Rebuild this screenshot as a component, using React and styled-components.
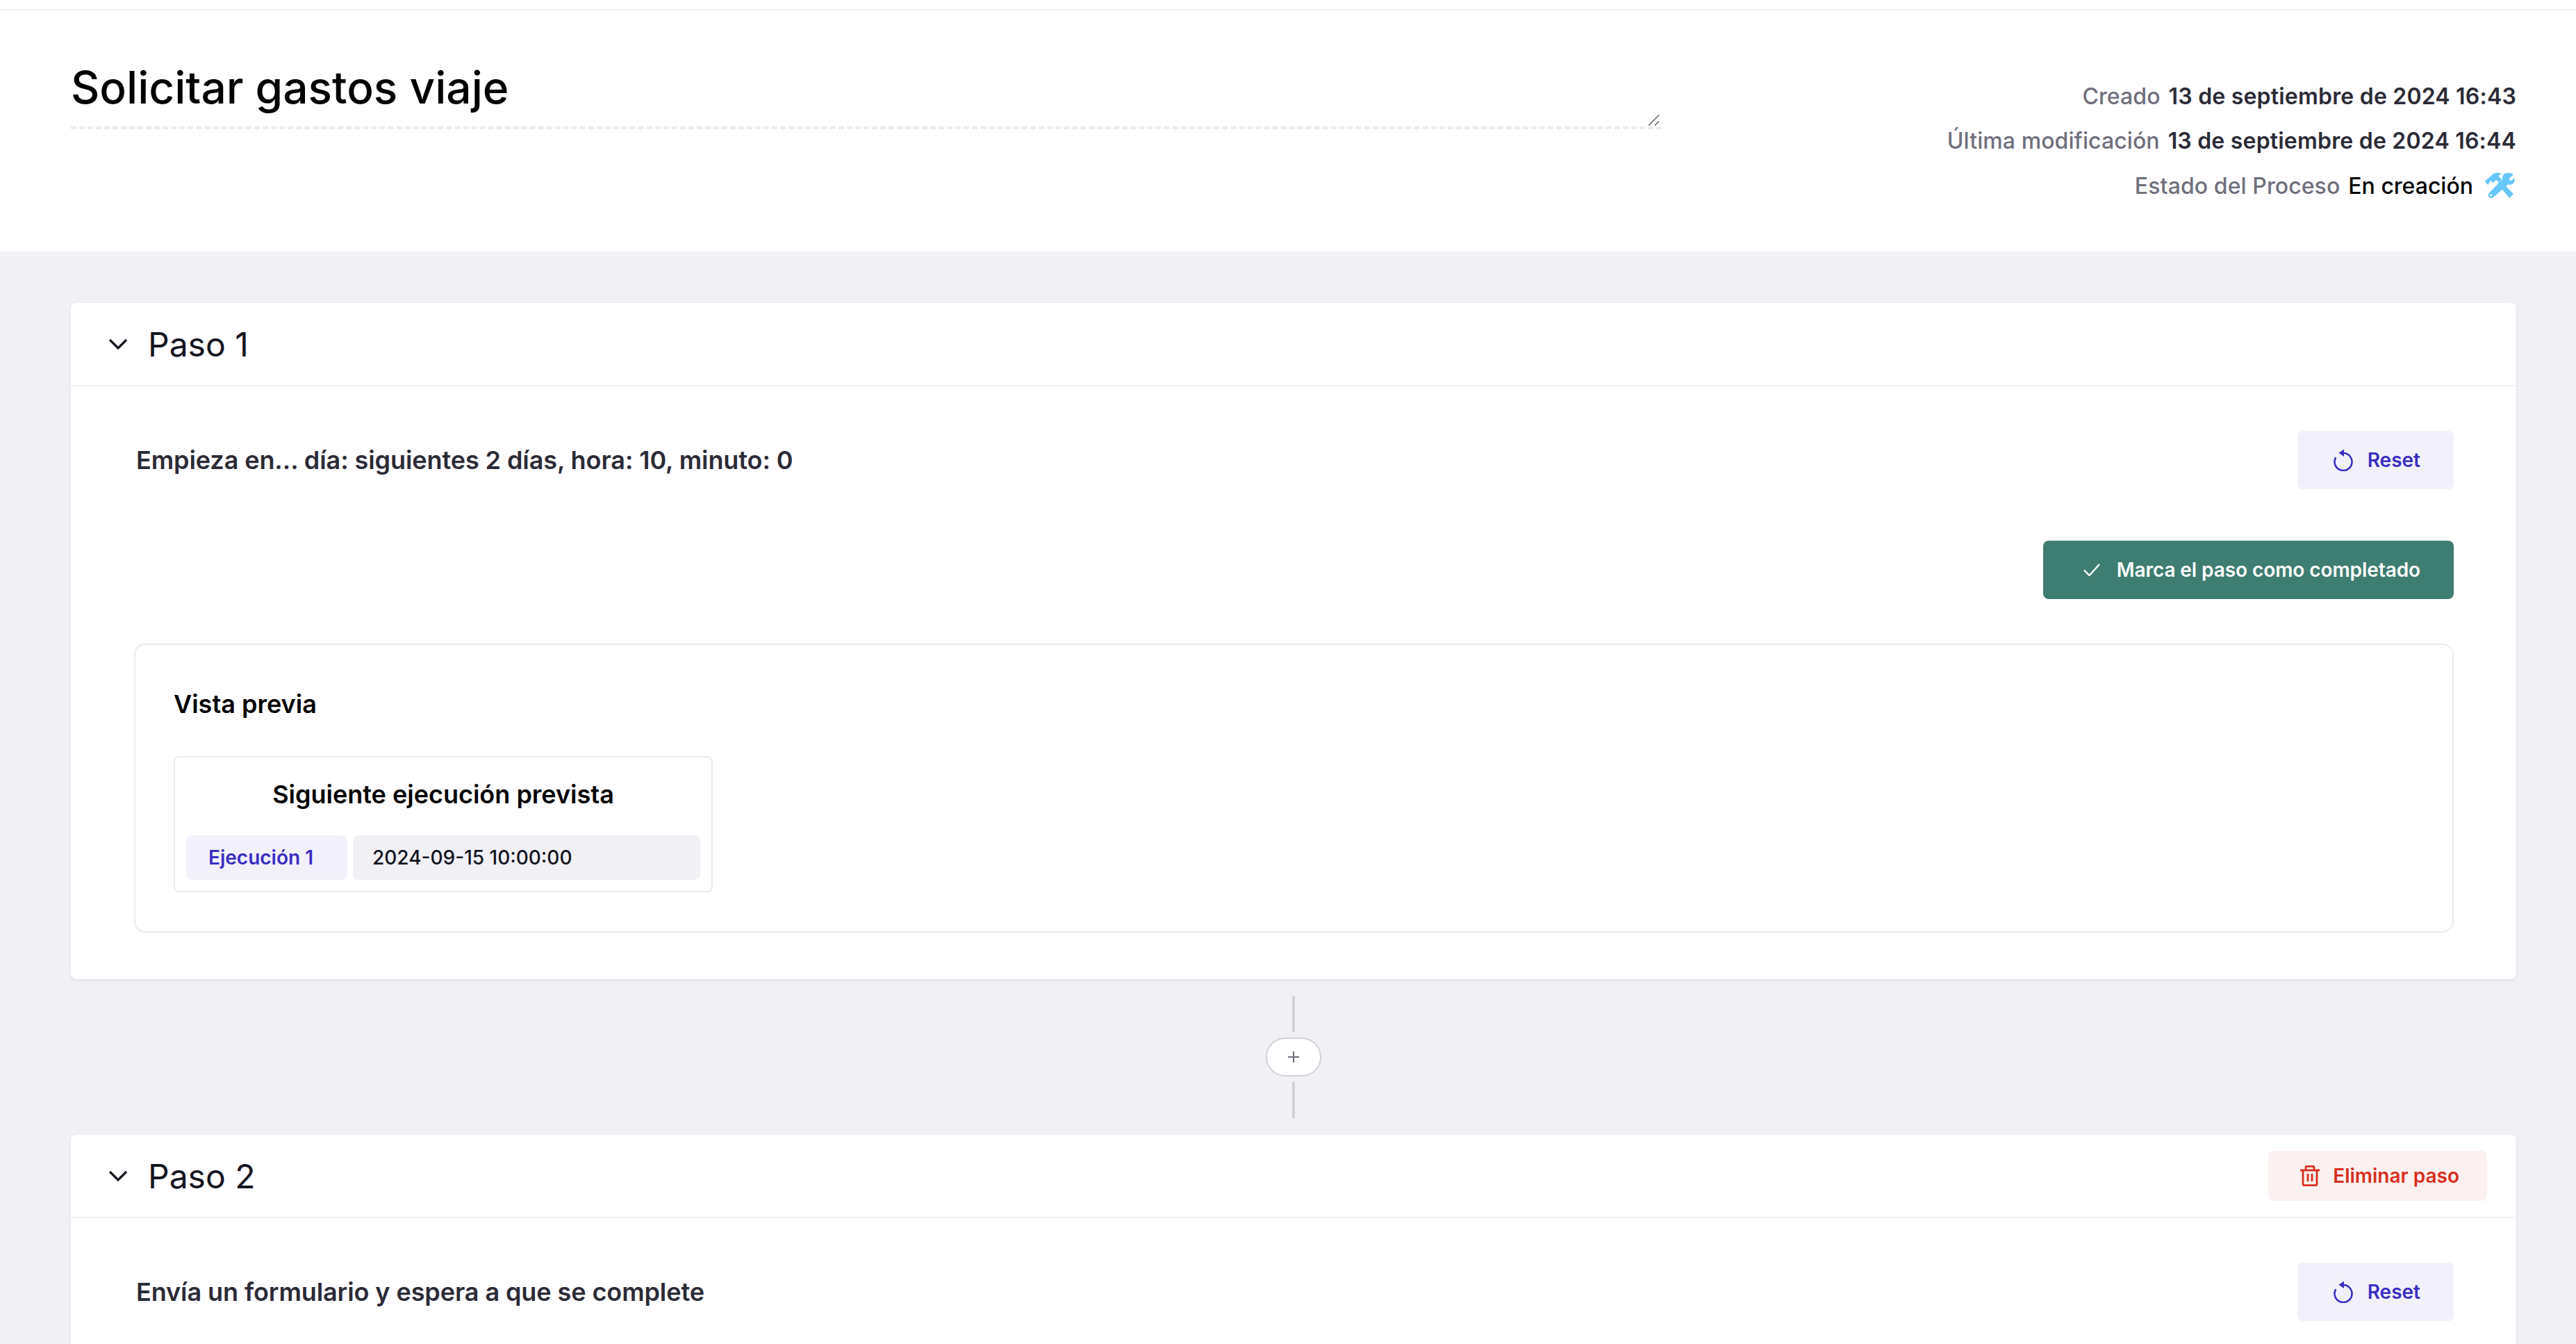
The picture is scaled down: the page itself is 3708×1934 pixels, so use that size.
import React from 'react'
import styled, { createGlobalStyle } from 'styled-components'

const GlobalStyle = createGlobalStyle`
    html, body {
        margin: 0;
        padding: 0;
        background: #fff;
    }
    * {
        box-sizing: border-box;
    }
    body {
        font-family: Inter, "Liberation Sans", sans-serif;
    }
`

const Page = styled.div`
    height: 1934px;
    overflow: hidden;
    padding-top: 13px;
    background: #fff;
`

const Header = styled.header`
    display: flex;
    justify-content: space-between;
    align-items: flex-start;
    height: 349px;
    padding: 72px 86px 0 102px;
    border-top: 2px solid #f0f0f5;
`

const TitleField = styled.div`
    position: relative;
    width: 2290px;
`

const TitleInput = styled.textarea`
    display: block;
    width: 100%;
    height: 99px;
    padding: 0;
    border: 0;
    border-bottom: 4px dashed #ececec;
    outline: none;
    resize: none;
    overflow: hidden;
    font-family: inherit;
    font-size: 64px;
    font-weight: 500;
    line-height: 78px;
    color: #000;
    background: transparent;
`

const ResizeGrip = styled.svg`
    position: absolute;
    right: 3px;
    bottom: 5px;
    width: 17px;
    height: 16px;
`

const Meta = styled.div`
    display: flex;
    flex-direction: column;
    align-items: flex-end;
    padding-top: 19px;
`

const MetaRow = styled.div`
    display: flex;
    align-items: center;
    gap: 12px;
    height: 64.5px;
    font-size: 32px;
    font-weight: 500;
`

const MetaLabel = styled.span`
    font-weight: 550;
    letter-spacing: 0.08px;
    color: #6f6f7c;
`

const MetaValue = styled.span`
    font-weight: ${p => p.$dark ? 500 : 600};
    letter-spacing: ${p => p.$dark ? 0 : 0.2}px;
    color: ${p => p.$dark ? '#000' : '#2b2b36'};
`

const ToolsIcon = styled.svg`
    width: 44px;
    height: 38px;
    margin: 0 2px 0 4px;
`

const Main = styled.main`
    height: 1572px;
    padding: 74px 86px 0 102px;
    background: #f0f0f5;
`

const Card = styled.section`
    background: #fff;
    border-radius: 8px;
    box-shadow: 0 2px 4px rgba(20, 20, 40, 0.08);
`

const CardHeader = styled.div`
    display: flex;
    align-items: center;
    justify-content: space-between;
    height: 120px;
    padding: 0 42px 0 54px;
    border-bottom: 2px solid #f0f0f5;
`

const CardTitle = styled.div`
    display: flex;
    align-items: center;
    gap: 29px;
    font-size: 48px;
    color: #14141f;
`

const Chevron = styled.svg`
    width: 28px;
    height: 16px;
`

const CardBody = styled.div`
    display: flex;
    flex-direction: column;
    padding: 64px 90px 67px 91px;
`

const StepRow = styled.div`
    display: flex;
    align-items: center;
    justify-content: ${p => p.$end ? 'flex-end' : 'space-between'};
    margin-top: ${p => p.$gap || 0}px;
`

const StepText = styled.div`
    padding-left: 3px;
    font-size: 36px;
    font-weight: 600;
    letter-spacing: -0.08px;
    color: #2b2b36;
`

const Button = styled.button`
    display: flex;
    align-items: center;
    height: ${p => p.$height || 84}px;
    padding: ${p => p.$padding || '0 48px'};
    gap: ${p => p.$gap || 20}px;
    border: 0;
    border-radius: 8px;
    font-family: inherit;
    font-size: 28px;
    font-weight: 600;
    letter-spacing: ${p => p.$tight ? -0.08 : 0}px;
    cursor: pointer;
    color: ${p => p.$color};
    background: ${p => p.$bg};
`

const Preview = styled.div`
    margin-top: 64px;
    padding: 56px 56px 56px 55px;
    border: 2px solid #ebebeb;
    border-radius: 16px;
`

const PreviewTitle = styled.h3`
    margin: 0 0 46px;
    font-size: 36px;
    line-height: 58px;
    font-weight: 600;
    color: #000;
`

const NextRun = styled.div`
    width: 776px;
    padding: 24px 16px 16px;
    border: 2px solid #ebebeb;
    border-radius: 8px;
`

const NextRunTitle = styled.div`
    margin-bottom: 30px;
    text-align: center;
    font-size: 36px;
    line-height: 58px;
    font-weight: 600;
    color: #000;
`

const RunRow = styled.div`
    display: grid;
    grid-template-columns: 232px 1fr;
    gap: 8px;
`

const RunCell = styled.div`
    display: flex;
    align-items: center;
    height: 64px;
    border-radius: 8px;
    font-size: 28px;
    padding-left: ${p => p.$accent ? 32 : 28}px;
    font-weight: ${p => p.$accent ? 600 : 500};
    color: ${p => p.$accent ? '#3a2ec3' : '#14141f'};
    background: ${p => p.$accent ? '#f2f1fb' : '#f0f0f5'};
`

const Connector = styled.div`
    display: flex;
    flex-direction: column;
    align-items: center;
    gap: 8px;
    height: 224px;
    padding-top: 24px;
`

const ConnectorLine = styled.div`
    width: 4px;
    height: 52px;
    background: #d2d2d9;
`

const AddButton = styled.button`
    display: flex;
    align-items: center;
    justify-content: center;
    width: 80px;
    height: 56px;
    padding: 0;
    border: 2px solid #d2d2d9;
    border-radius: 28px;
    background: #fff;
`

const ResetIcon = ({ color }) => (
    <svg width="28" height="32" viewBox="0 0 28 32" fill="none">
        <path d="M14 6 A12.5 12.5 0 1 1 3.2 12.2" stroke={color} strokeWidth="2.6" />
        <path d="M15 0.5 V11 L7.5 5.8 Z" fill={color} />
    </svg>
)

const CheckIcon = () => (
    <svg width="24" height="18" viewBox="0 0 24 18" fill="none">
        <path d="M1 9.5 L8.5 17 L23 1" stroke="#fff" strokeWidth="2.4" />
    </svg>
)

const TrashIcon = ({ color }) => (
    <svg width="28" height="30" viewBox="0 0 28 30" fill="none" stroke={color} strokeWidth="2.8">
        <path d="M0 7 H28" />
        <path d="M8 7 V3 Q8 1.3 9.7 1.3 H18.3 Q20 1.3 20 3 V7" />
        <path d="M4 7 V27 Q4 28.7 5.7 28.7 H22.3 Q24 28.7 24 27 V7" />
        <path d="M11 12 V23 M17 12 V23" />
    </svg>
)

const ChevronDown = () => (
    <Chevron viewBox="0 0 28 16" fill="none">
        <path d="M2 2 L14 14 L26 2" stroke="#14141f" strokeWidth="3.2" />
    </Chevron>
)

const Step = ({ title, action, children }) => (
    <Card>
        <CardHeader>
            <CardTitle>
                <ChevronDown />
                {title}
            </CardTitle>
            {action}
        </CardHeader>
        <CardBody>{children}</CardBody>
    </Card>
)

const ResetButton = () => (
    <Button $color="#3a2ec3" $bg="#f2f1fb" $padding="0 48px 0 52px" $gap={21}>
        <ResetIcon color="#3a2ec3" />
        Reset
    </Button>
)

const App = () => (
    <Page>
        <GlobalStyle />
        <Header>
            <TitleField>
                <TitleInput defaultValue="Solicitar gastos viaje" />
                <ResizeGrip viewBox="0 0 17 16" fill="none" stroke="#6a6a6a" strokeWidth="1.6">
                    <path d="M1 15.5 L16 0.5 M10 15.5 L16 9.5" />
                </ResizeGrip>
            </TitleField>
            <Meta>
                <MetaRow>
                    <MetaLabel>Creado</MetaLabel>
                    <MetaValue>13 de septiembre de 2024 16:43</MetaValue>
                </MetaRow>
                <MetaRow>
                    <MetaLabel>Última modificación</MetaLabel>
                    <MetaValue>13 de septiembre de 2024 16:44</MetaValue>
                </MetaRow>
                <MetaRow>
                    <MetaLabel>Estado del Proceso</MetaLabel>
                    <MetaValue $dark>En creación</MetaValue>
                    <ToolsIcon viewBox="0 0 44 38" fill="#66c7fb">
                        <path d="M1 13 L13 2 Q18 -1 25 2 L20 5 L25 10 L21 14 L17 11 L13 15 L9 12 L5 18 Z" />
                        <path d="M19 16 L23 12 L42 31 L36 37 Z" />
                        <path d="M42 3 L36 8.5 L36.5 11.5 L39 12 L43 8 Q45 14 40 17 Q36.5 18.5 34 17.5 L13 36 Q10 38 7 36 Q4.5 33 6.5 30 L26 10 Q25 4 30 1.5 Q36 -0.5 42 3 Z" />
                        <circle cx="9.5" cy="33" r="1.6" fill="#fff" />
                    </ToolsIcon>
                </MetaRow>
            </Meta>
        </Header>
        <Main>
            <Step title="Paso 1">
                <StepRow>
                    <StepText>Empieza en... día: siguientes 2 días, hora: 10, minuto: 0</StepText>
                    <ResetButton />
                </StepRow>
                <StepRow $end $gap={74}>
                    <Button $tight $color="#fff" $bg="#3e7d71" $padding="0 48px 0 58px" $gap={24}>
                        <CheckIcon />
                        Marca el paso como completado
                    </Button>
                </StepRow>
                <Preview>
                    <PreviewTitle>Vista previa</PreviewTitle>
                    <NextRun>
                        <NextRunTitle>Siguiente ejecución prevista</NextRunTitle>
                        <RunRow>
                            <RunCell $accent>Ejecución 1</RunCell>
                            <RunCell>2024-09-15 10:00:00</RunCell>
                        </RunRow>
                    </NextRun>
                </Preview>
            </Step>
            <Connector>
                <ConnectorLine />
                <AddButton>
                    <svg width="18" height="18" viewBox="0 0 18 18" fill="none">
                        <path d="M9 1 V17 M1 9 H17" stroke="#6f6f7c" strokeWidth="2" />
                    </svg>
                </AddButton>
                <ConnectorLine />
            </Connector>
            <Step
                title="Paso 2"
                action={
                    <Button $color="#d92d20" $bg="#fcf1f0" $height={72} $padding="0 40px 0 46px" $gap={19}>
                        <TrashIcon color="#d92d20" />
                        Eliminar paso
                    </Button>
                }
            >
                <StepRow>
                    <StepText>Envía un formulario y espera a que se complete</StepText>
                    <ResetButton />
                </StepRow>
            </Step>
        </Main>
    </Page>
)

export default App
